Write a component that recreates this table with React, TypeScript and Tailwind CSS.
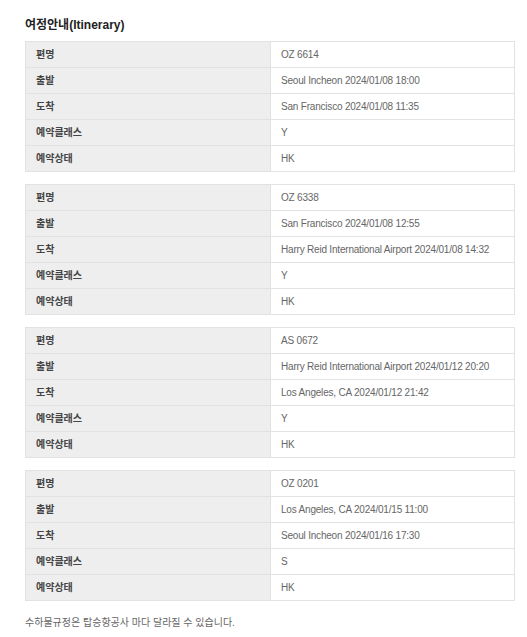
import React from "react";

type Leg = { flight: string; dep: string; arr: string; cls: string; status: string };

const legs: Leg[] = [
  { flight: "OZ 6614", dep: "Seoul Incheon 2024/01/08 18:00", arr: "San Francisco 2024/01/08 11:35", cls: "Y", status: "HK" },
  { flight: "OZ 6338", dep: "San Francisco 2024/01/08 12:55", arr: "Harry Reid International Airport 2024/01/08 14:32", cls: "Y", status: "HK" },
  { flight: "AS 0672", dep: "Harry Reid International Airport 2024/01/12 20:20", arr: "Los Angeles, CA 2024/01/12 21:42", cls: "Y", status: "HK" },
  { flight: "OZ 0201", dep: "Los Angeles, CA 2024/01/15 11:00", arr: "Seoul Incheon 2024/01/16 17:30", cls: "S", status: "HK" },
];

function Row({ label, value }: { label: string; value: string }) {
  return (
    <tr>
      <th className="h-[26px] w-[245px] whitespace-nowrap border border-[#e2e2e2] bg-[#eeeeee] p-0 pl-[10px] text-left align-middle text-[10px] font-bold leading-[14px] text-[#444]">
        {label}
      </th>
      <td className="h-[26px] whitespace-nowrap border border-[#e2e2e2] bg-white p-0 pl-[10px] align-middle text-[10px] leading-[14px] tracking-[-0.2px] text-[#666]">
        {value}
      </td>
    </tr>
  );
}

export default function App() {
  return (
    <div
      className="min-h-[637px] w-[527px] bg-white pl-[25px] pr-[12px] pt-[16px]"
      style={{ fontFamily: '"Liberation Sans", "Noto Sans CJK KR", sans-serif' }}
    >
      <h2 className="mb-[7px] text-[12px] font-bold leading-[18px] text-[#222]">여정안내(Itinerary)</h2>
      <div className="flex flex-col gap-[12px]">
        {legs.map((l, i) => (
          <table key={i} className="w-[490px] table-fixed border-collapse">
            <tbody>
              <Row label="편명" value={l.flight} />
              <Row label="출발" value={l.dep} />
              <Row label="도착" value={l.arr} />
              <Row label="예약클래스" value={l.cls} />
              <Row label="예약상태" value={l.status} />
            </tbody>
          </table>
        ))}
      </div>
      <p className="mt-[15px] text-[10px] leading-[14px] text-[#666]">수하물규정은 탑승항공사 마다 달라질 수 있습니다.</p>
    </div>
  );
}
